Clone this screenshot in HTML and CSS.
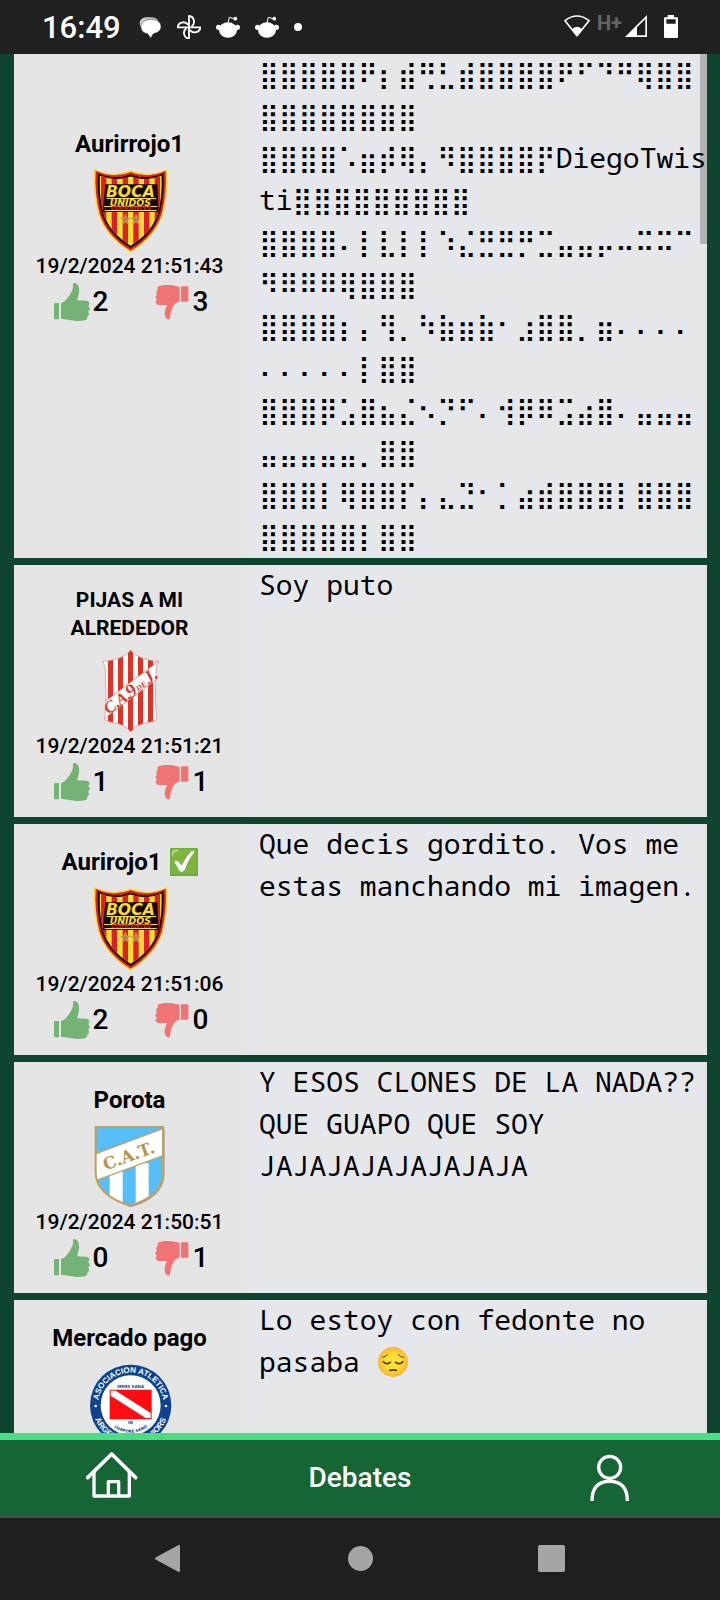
FILE: index.html
```html
<!DOCTYPE html>
<html lang="es">
<head>
<meta charset="utf-8">
<meta name="viewport" content="width=device-width, initial-scale=1">
<title>Debates</title>
<link rel="stylesheet" href="styles.css">
</head>
<body>
<svg class="sprites" aria-hidden="true">
  <defs>
    <path id="boca-outline" d="M280 147Q308 160 338 161Q368 160 390 151Q412 160 442 161Q472 160 500 147Q504 215 488 280Q467 350 390 398Q313 350 292 280Q276 215 280 147Z"/>
    <clipPath id="jul-clip"><path d="M390 270Q372 298 305 305Q314 315 314 330L316 420L311 478Q317 485 330 486Q375 492 390 516Q405 492 450 486Q463 485 469 478L464 420L466 330Q466 315 475 305Q408 298 390 270Z"/></clipPath>
    <clipPath id="cat-clip"><path d="M285 201H487V340Q485 410 387 437Q287 405 285 340Z"/></clipPath>
  </defs>
  <symbol id="boca" viewBox="262 147 252 252">
    <use href="#boca-outline" fill="#f7dc2e"/>
    <use href="#boca-outline" fill="#dc1f2a" transform="translate(390 268) scale(.955) translate(-390 -268)"/>
    <use href="#boca-outline" fill="#160905" transform="translate(390 268) scale(.895) translate(-390 -268)"/>
    <clipPath id="boca-clip"><use href="#boca-outline" transform="translate(390 268) scale(.84) translate(-390 -268)"/></clipPath>
    <g clip-path="url(#boca-clip)">
      <path fill="#f8dc2f" d="M280 147h220v252H280z"/>
      <path fill="#dc1f2a" d="M301 147h16v252h-16zM333 147h16v252h-16zM366 147h16v252h-16zM398 147h16v252h-16zM430 147h16v252h-16zM462 147h16v252h-16z"/>
    </g>
    <path fill="#160905" d="M314 193H470L474 276H306Z"/>
    <path fill="#f8dc2f" d="M318 234H466V237H318ZM310 258H470V261H310ZM312 270H468V273H312Z"/>
    <text x="389" y="232" class="boca-name">BOCA</text>
    <text x="389" y="257" class="boca-sub">UNIDOS</text>
    <text x="391" y="271" class="boca-city">CORRIENTES</text>
    <path fill="#bd813c" stroke="#e2aa70" stroke-width="2" d="M374 283l4 11h12l-9 7 3 11-10-6-10 6 3-11-9-7h12zM406 283l4 11h12l-9 7 3 11-10-6-10 6 3-11-9-7h12z"/>
  </symbol>
  <symbol id="up" viewBox="156 483 126 126">
    <path fill="#75b276" d="M165 551Q165 549 168 549H180V598H168Q165 598 165 595ZM186 549Q194 549 200 541Q217 521 221 507Q223 499 222 491Q228 486 236 494Q243 506 239 523Q237 533 234 541L263 542Q272 544 271 551Q271 556 267 558Q275 563 271 571L267 575Q273 580 268 588L264 591Q267 597 260 600Q240 605 218 601L186 596Z"/>
  </symbol>
  <symbol id="down" viewBox="450 483 126 126">
    <path fill="#f17474" d="M540 499H559Q562 499 562 502V542Q562 545 559 545H540ZM536 500V545Q525 546 519 555Q508 573 507 597Q500 600 494 594Q489 583 492 571Q495 563 498 555H472Q464 553 464 547Q464 542 468 540Q461 535 464 528L468 524Q463 520 467 512L471 509Q466 502 475 498Q493 494 513 496Z"/>
  </symbol>
  <symbol id="reddit" viewBox="649 45 72 72">
    <ellipse cx="685" cy="90" rx="27" ry="23" fill="#fff"/>
    <circle cx="657" cy="82" r="8" fill="#fff"/><circle cx="713" cy="82" r="8" fill="#fff"/>
    <path fill="none" stroke="#fff" stroke-width="3" d="M685 68l4-16 14 4"/><circle cx="707" cy="56" r="5.500" fill="#fff"/>
  </symbol>
</svg>

<header class="status">
  <time class="clock">16:49</time>
  <div class="status-left">
    <svg class="s-icon" viewBox="415 45 72 72"><path fill="#ccc" d="M420 66q4-15 25-14 25-1 31 10l-45 30q-11-9-11-26z"/><path fill="#fff" stroke="#202020" stroke-width="1.500" d="M454 58c18 0 30 9 30 22 0 11-9 18-23 21l-8 14-9-14c-13-2-20-10-20-21 0-13 12-22 30-22z"/></svg>
    <svg class="s-icon" viewBox="532 45 72 72"><path fill="none" stroke="#fff" stroke-width="5.500" stroke-linejoin="round" d="M568 82V48a16 17 0 0 1 8 31M568 82h34a17 16 0 0 1-31 8M568 82v34a16 17 0 0 1-8-31M568 82h-34a17 16 0 0 1 31-8"/></svg>
    <svg class="s-icon"><use href="#reddit"/></svg>
    <svg class="s-icon"><use href="#reddit"/></svg>
    <span class="dot"></span>
  </div>
  <div class="status-right">
    <svg class="wifi" viewBox="612 39 78 84"><path fill="none" stroke="#fff" stroke-width="5" stroke-linejoin="round" d="M615 62Q651 34 687 62L651 107Z"/><path fill="#fff" d="M635 88Q651 73 667 88L651 109Z"/></svg>
    <span class="net">H+</span>
    <svg class="signal" viewBox="795 39 66 84"><path fill="#fff" fill-rule="evenodd" d="M795 111L861 45V111ZM831 82V106H856V57Z"/></svg>
    <svg class="battery" viewBox="912 39 42 84"><path fill="#fff" fill-rule="evenodd" d="M923 45h19v7h9q3 0 3 3v56q0 3-3 3h-36q-3 0-3-3V55q0-3 3-3h8zM919 58v13h28V58z"/></svg>
  </div>
</header>

<main class="feed">
  <div class="scrollbar"></div>
  <article class="post">
    <aside class="author author-tall">
      <h2 class="name">Aurirrojo1</h2>
      <svg class="crest" role="img" aria-label="Boca Unidos"><use href="#boca"/></svg>
      <time class="date">19/2/2024 21:51:43</time>
      <div class="votes">
        <button class="vote" aria-label="Me gusta"><svg class="thumb"><use href="#up"/></svg>2</button>
        <button class="vote" aria-label="No me gusta"><svg class="thumb"><use href="#down"/></svg>3</button>
      </div>
    </aside>
    <p class="text art"><span class="br">⣿⣿⣿⣿⣿&#x281F;&#x2846;&#x28FE;&#x289B;&#x28C3;&#x28FE;⣿⣿⣿⣿&#x281F;&#x280B;&#x2819;&#x281B;&#x28BF;⣿⣿</span><br><span class="br">⣿⣿⣿⣿⣿⣿⣿⣿</span><br><span class="br">⣿⣿⣿⣿&#x2821;&#x28F6;&#x287E;&#x28BF;&#x2844;&#x283B;⣿⣿⣿⣿&#x285F;</span>DiegoTwis<br>ti<span class="br">⣿⣿⣿⣿⣿⣿⣿⣿⣿</span><br><span class="br">⣿⣿⣿⣿&#x2804;&#x2847;&#x28C7;&#x2847;&#x2847;&#x2831;&#x28CC;&#x28DB;&#x28DB;&#x285B;&#x28C9;&#x28E4;&#x28E4;&#x2864;&#x2824;&#x282D;&#x282D;&#x2809;</span><br><span class="br">&#x283B;&#x283F;&#x283F;&#x283F;&#x28BF;⣿⣿⣿</span><br><span class="br">⣿⣿⣿⣿&#x2846;&#x2844;&#x28BB;&#x2840;&#x2833;&#x28F7;&#x28F6;&#x28F7;&#x2802;&#x28F0;⣿⣿&#x2840;&#x28F6;&#x2804;&#x2804;&#x2804;&#x2804;</span><br><span class="br">&#x2804;&#x2804;&#x2804;&#x2804;&#x2804;&#x2847;⣿⣿</span><br><span class="br">⣿⣿⣿&#x287F;&#x28E1;⣿&#x28E6;&#x28CC;&#x2822;&#x2859;&#x280B;&#x2804;&#x28BA;&#x287F;&#x283F;&#x28E9;&#x28F4;⣿&#x2804;&#x28E4;&#x28E4;&#x28E4;</span><br><span class="br">&#x28E4;&#x28E4;&#x28E4;&#x28E4;&#x28E4;&#x2840;⣿⣿</span><br><span class="br">⣿⣿⣿&#x2847;&#x28BF;⣿⣿&#x284F;&#x2844;&#x28C4;&#x28D9;&#x2802;&#x2841;&#x28F4;&#x28FE;⣿⣿⣿&#x2847;⣿⣿⣿</span><br><span class="br">⣿⣿⣿⣿⣿&#x2847;⣿⣿</span></p>
  </article>

  <article class="post">
    <aside class="author">
      <h2 class="name name-long">PIJAS A MI ALREDEDOR</h2>
      <svg class="crest" viewBox="262 267 252 252" role="img" aria-label="9 de Julio">
        <g clip-path="url(#jul-clip)">
          <path fill="#fff" d="M300 265h180v255H300z"/>
          <path fill="#e03127" d="M322 265h15v255h-15zM352 265h15v255h-15zM382 265h15v255h-15zM412 265h15v255h-15zM442 265h15v255h-15z"/>
          <path fill="#fff" stroke="#dc6258" stroke-width="2" d="M300 434L478 300V350L300 484Z"/>
        </g>
        <path fill="none" stroke="#d78780" stroke-width="2" d="M390 270Q372 298 305 305Q314 315 314 330L316 420L311 478Q317 485 330 486Q375 492 390 516Q405 492 450 486Q463 485 469 478L464 420L466 330Q466 315 475 305Q408 298 390 270Z"/>
        <g class="jul-text" transform="rotate(-37 390 392)">
          <text x="294" y="410" font-size="50">C.</text><text x="337" y="410" font-size="48">A.</text><text x="376" y="412" font-size="58">9</text><text x="407" y="409" font-size="24">DE</text><text x="444" y="410" font-size="54">J.</text>
        </g>
      </svg>
      <time class="date">19/2/2024 21:51:21</time>
      <div class="votes">
        <button class="vote" aria-label="Me gusta"><svg class="thumb"><use href="#up"/></svg>1</button>
        <button class="vote" aria-label="No me gusta"><svg class="thumb"><use href="#down"/></svg>1</button>
      </div>
    </aside>
    <p class="text">Soy puto</p>
  </article>

  <article class="post">
    <aside class="author">
      <h2 class="name">Aurirojo1 <svg class="check" viewBox="0 0 82 82" role="img" aria-label="verificado"><rect width="82" height="82" rx="4" fill="#6aaa3a"/><rect x="3" y="2" width="75" height="75" rx="5" fill="#7eb441"/><path d="M7 20Q7 7 22 7" fill="none" stroke="#b9d78b" stroke-width="5" stroke-linecap="round"/><path fill="#fff" d="M13 41Q18 35 25 40L34 52Q46 27 63 9Q70 7 72 12Q53 35 43 64Q34 76 27 65Z"/></svg></h2>
      <svg class="crest" role="img" aria-label="Boca Unidos"><use href="#boca"/></svg>
      <time class="date">19/2/2024 21:51:06</time>
      <div class="votes">
        <button class="vote" aria-label="Me gusta"><svg class="thumb"><use href="#up"/></svg>2</button>
        <button class="vote" aria-label="No me gusta"><svg class="thumb"><use href="#down"/></svg>0</button>
      </div>
    </aside>
    <p class="text">Que decis gordito. Vos me estas manchando mi imagen.</p>
  </article>

  <article class="post">
    <aside class="author">
      <h2 class="name">Porota</h2>
      <svg class="crest" viewBox="262 195 252 252" role="img" aria-label="Atlético Tucumán">
        <path fill="#000" opacity=".3" d="M290 206H492V343Q490 414 391 442Q292 410 290 343Z"/>
        <g clip-path="url(#cat-clip)">
          <path fill="#56bef9" d="M283 199h206v240H283z"/>
          <path fill="#fff" d="M327 330h39v110h-39zM405 310h39v130h-39z"/>
          <path fill="#fff" stroke="#c4a158" stroke-width="4" d="M280 283L492 204V285L280 364Z"/>
        </g>
        <path fill="none" stroke="#c4a158" stroke-width="6" d="M285 201H487V340Q485 410 387 437Q287 405 285 340Z"/>
        <text class="cat-text" x="385" y="305" transform="rotate(-20 385 290)">C.A.T.</text>
      </svg>
      <time class="date">19/2/2024 21:50:51</time>
      <div class="votes">
        <button class="vote" aria-label="Me gusta"><svg class="thumb"><use href="#up"/></svg>0</button>
        <button class="vote" aria-label="No me gusta"><svg class="thumb"><use href="#down"/></svg>1</button>
      </div>
    </aside>
    <p class="text">Y ESOS CLONES DE LA NADA?? QUE GUAPO QUE SOY JAJAJAJAJAJAJAJA</p>
  </article>

  <article class="post">
    <aside class="author">
      <h2 class="name">Mercado pago</h2>
      <svg class="crest" viewBox="262 219 252 252" role="img" aria-label="Argentinos Juniors">
        <circle cx="390" cy="346" r="122" fill="#0f4390"/>
        <circle cx="390" cy="346" r="90" fill="#fff"/>
        <path fill="#fd0d12" d="M327 299h126v89H327z"/>
        <path fill="#fff" d="M330 302H345L450 369V384H435L330 317Z"/>
        <path id="arc-top" fill="none" d="M292 346A98 98 0 0 1 488 346"/>
        <path id="arc-bottom" fill="none" d="M276 346A114 114 0 0 0 504 346"/>
        <path id="arc-motto" fill="none" d="M315 382A84 84 0 0 0 465 382"/>
        <g class="arg-text"><text><textPath href="#arc-top" startOffset="50%">ASOCIACION ATLETICA</textPath></text><text><textPath href="#arc-bottom" startOffset="50%">ARGENTINOS JUNIORS</textPath></text></g>
        <circle cx="285" cy="348" r="4" fill="#fff"/><circle cx="496" cy="348" r="4" fill="#fff"/>
        <g class="arg-motto"><text x="390" y="294">MENS SANA</text><text x="389" y="403">IN</text><text><textPath href="#arc-motto" startOffset="50%">CORPORE SANO</textPath></text></g>
      </svg>
      <time class="date">19/2/2024 21:50:32</time>
      <div class="votes">
        <button class="vote" aria-label="Me gusta"><svg class="thumb"><use href="#up"/></svg>0</button>
        <button class="vote" aria-label="No me gusta"><svg class="thumb"><use href="#down"/></svg>0</button>
      </div>
    </aside>
    <p class="text">Lo estoy con fedonte no pasaba <svg class="emoji" viewBox="0 0 96 96" role="img" aria-label="pensativo"><defs><radialGradient id="face"><stop offset=".5" stop-color="#fee135"/><stop offset="1" stop-color="#f8b42b"/></radialGradient></defs><circle cx="48" cy="48" r="45" fill="url(#face)"/><g fill="none" stroke="#4f3a2b" stroke-linecap="round"><path stroke-width="5" d="M19 47q9 11 21 2M56 49q12 9 21-2M38 73q10-3 20 0"/><path stroke-width="3" d="M17 34q9-1 15-8M64 26q6 7 15 8"/></g></svg></p>
  </article>
</main>

<nav class="tabs">
  <a class="tab" href="#" aria-label="Inicio"><svg class="tab-icon" viewBox="251 480 168 168" fill="none" stroke="#fff" stroke-width="10" stroke-linecap="round" stroke-linejoin="round"><path d="M262 563L334 492L406 563" stroke-width="11"/><path d="M281 547V618H387V547M324 616V575H355V616"/></svg></a>
  <a class="tab" href="#">Debates</a>
  <a class="tab" href="#" aria-label="Perfil"><svg class="tab-icon" viewBox="479 480 168 168" fill="none" stroke="#fff" stroke-width="10"><circle cx="568" cy="532" r="33"/><path d="M515 633C515 592 534 574 568 574S621 592 621 633"/></svg></a>
</nav>

<footer class="system">
  <button class="sys" aria-label="Atrás"><svg class="sys-icon" viewBox="0 0 27 27"><path fill="#a5a5a5" stroke="#a5a5a5" stroke-width="2" stroke-linejoin="round" d="M1 13.500L24 1V26Z"/></svg></button>
  <button class="sys" aria-label="Inicio"><svg class="sys-icon" viewBox="0 0 27 27"><circle cx="13.500" cy="13.500" r="12.500" fill="#a5a5a5"/></svg></button>
  <button class="sys" aria-label="Recientes"><svg class="sys-icon" viewBox="0 0 27 27"><rect width="27" height="27" rx="2" fill="#a5a5a5"/></svg></button>
</footer>
</body>
</html>
```
FILE: styles.css
```css
* { box-sizing: border-box; margin: 0; }

body {
  display: flex;
  flex-direction: column;
  height: 100vh;
  background: #0f452f;
  color: #000;
  font-family: Roboto, "Liberation Sans", sans-serif;
}

.sprites { position: absolute; width: 0; height: 0; }

button {
  padding: 0;
  border: 0;
  background: none;
  color: inherit;
  font: inherit;
}

svg { display: block; }

/* Status bar */
.status {
  display: flex;
  align-items: center;
  flex: none;
  height: 54px;
  padding: 0 42px;
  background: #202020;
  color: #fff;
}
.clock { font-size: 31px; font-weight: 500; }
.status-left { display: flex; align-items: center; gap: 15px; margin-left: 17px; }
.s-icon { width: 24px; height: 24px; }
.dot { width: 8px; height: 8px; border-radius: 50%; background: #fff; }
.status-right { display: flex; align-items: center; height: 100%; margin-left: auto; }
.wifi { width: 26px; height: 28px; margin-right: 7px; }
.net { align-self: flex-start; margin-right: 3px; color: #666; font-size: 20px; font-weight: 700; line-height: 46px; }
.signal { width: 22px; height: 28px; }
.battery { width: 14px; height: 28px; margin-left: 17px; }

/* Message list */
.feed {
  position: relative;
  display: flex;
  flex-direction: column;
  flex: 1 1 0;
  gap: 7px;
  min-height: 0;
  margin: 0 13px 0 14px;
  overflow: hidden;
}
.scrollbar {
  position: absolute;
  top: 0;
  right: 0;
  width: 7px;
  height: 190px;
  background: rgba(0, 0, 0, .22);
}
.post {
  display: grid;
  grid-template-columns: 1fr 2fr;
  flex: none;
  background: #e5e7eb;
}
.author {
  display: flex;
  flex-direction: column;
  align-items: center;
  padding: 21px 14px 14px;
  background: #e5e5e5;
  text-align: center;
}
.author-tall { padding-top: 73px; }
.name { font-size: 24px; font-weight: 700; line-height: 35px; }
.name-long { font-size: 21px; line-height: 28px; max-width: 140px; }
.check { display: inline-block; width: 28px; height: 28px; margin-left: 2px; vertical-align: -6px; }
.crest { width: 84px; height: 84px; margin-top: 7px; }
.date { margin-bottom: 2px; font-size: 21px; font-weight: 500; line-height: 26px; }
.votes { display: flex; justify-content: center; gap: 42px; align-self: stretch; margin: 0 -14px; }
.vote { display: flex; align-items: center; font-size: 28px; font-weight: 500; line-height: 42px; }
.thumb { width: 42px; height: 42px; }

.text {
  min-width: 0;
  margin-top: -2px;
  padding: 0 0 2px 14px;
  font-family: "Noto Sans Mono", "Droid Sans Mono", "DejaVu Sans Mono", monospace;
  font-size: 28px;
  line-height: 42px;
}
.art { white-space: nowrap; }
.br { font-family: "Noto Sans Symbols2", "DejaVu Sans", sans-serif; font-size: 27px; line-height: 1; }
.emoji { display: inline-block; width: 32px; height: 32px; vertical-align: -6px; }

/* Crest lettering */
.boca-name, .boca-sub, .boca-city { font-family: "DejaVu Sans", sans-serif; font-weight: 700; font-style: italic; text-anchor: middle; fill: #f8dc2f; }
.boca-name { font-size: 47px; }
.boca-sub { font-size: 28px; }
.boca-city { font-size: 17px; fill: #c8232a; }
.jul-text { font-family: "Liberation Serif", serif; font-style: italic; font-weight: 700; fill: #d8392f; }
.cat-text { font-family: "DejaVu Serif", serif; font-size: 50px; font-weight: 700; text-anchor: middle; fill: #b8954b; }
.arg-text { font-family: "Liberation Sans", sans-serif; font-size: 24px; font-weight: 700; text-anchor: middle; fill: #fff; }
.arg-motto { font-family: "DejaVu Sans", sans-serif; font-size: 12px; font-weight: 700; text-anchor: middle; fill: #0f4390; }

/* Tab bar */
.tabs {
  display: flex;
  align-items: center;
  justify-content: space-around;
  flex: none;
  height: 83px;
  border-top: 7px solid #4ade80;
  background: #166534;
}
.tab { color: #fff; font-size: 28px; font-weight: 500; line-height: 42px; text-decoration: none; }
.tab-icon { width: 56px; height: 56px; }

/* System buttons */
.system {
  display: flex;
  align-items: center;
  justify-content: space-between;
  flex: none;
  height: 84px;
  padding: 0 21.5% 2px;
  border-top: 2px solid #4a4a4a;
  background: #1f1f1f;
}
.sys-icon { width: 27px; height: 27px; }
```
